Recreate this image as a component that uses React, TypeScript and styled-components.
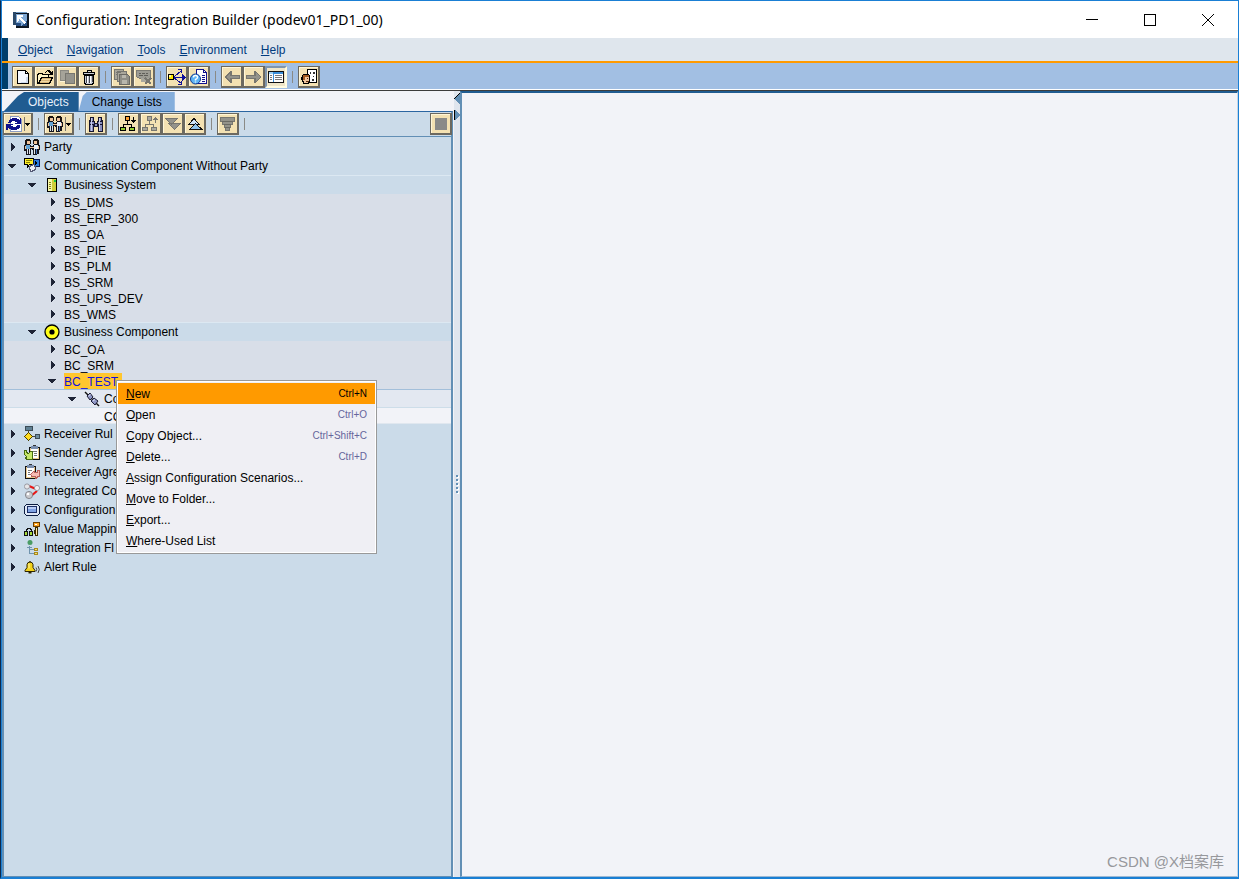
import React from "react";
import styled, { createGlobalStyle, css } from "styled-components";

const color = {
  frame: "#1a7fd4",
  navy: "#003e6b",
  orange: "#ff9a00",
  menuBar: "#dfe6ed",
  toolBar: "#a2bfe3",
  pane: "#f2f3f8",
  tree: "#cbdbe9",
  group: "#d8dee8",
  edge: "#628fb5",
  tabActive: "#205c91",
  tabIdle: "#86aedc",
};

const Global = createGlobalStyle`
  * { box-sizing: border-box; }
  html, body { margin: 0; padding: 0; }
  body {
    font-family: "Liberation Sans", Arial, sans-serif;
    font-size: 12px;
    line-height: 16px;
    color: #000;
  }
  button { font: inherit; color: inherit; padding: 0; margin: 0; border: 0; background: none; text-align: left; }
  ul { list-style: none; margin: 0; padding: 0; }
  svg { flex: none; }
`;

/* ---------- window frame ---------- */

const Window = styled.div`
  position: relative;
  display: flex;
  flex-direction: column;
  min-height: 100vh;
  border: 1px solid ${color.frame};
  border-left-color: #0c2a4d;
  border-bottom-width: 2px;
  box-shadow: inset 1px 0 0 ${color.frame};
  padding-left: 1px;
  background: ${color.pane};
`;

const TitleBar = styled.header`
  display: flex;
  align-items: center;
  height: 37px;
  padding: 0 1px 0 11px;
  background: #fff;
`;

const Title = styled.h1`
  flex: 1;
  margin: 0 0 0 7px;
  font: 400 14px/20px "Noto Sans", "Open Sans", sans-serif;
`;

const CaptionButton = styled.button`
  display: flex;
  align-items: center;
  justify-content: center;
  width: 58px;
  height: 37px;
`;

const MenuBar = styled.nav`
  display: flex;
  align-items: center;
  gap: 14px;
  height: 23px;
  padding-left: 10px;
  border-left: 6px solid ${color.navy};
  background: ${color.menuBar};
  color: #003a7d;
`;

const ToolStrip = styled.div`
  display: flex;
  align-items: center;
  height: 26px;
  padding: 2px 0 0 4px;
  border-left: 6px solid ${color.navy};
  background: ${color.toolBar};
`;

const ToolFrame = styled.div`
  border-top: 2px solid ${color.orange};
  border-bottom: 1px solid #3c3c3c;
  padding-bottom: 1px;
  background: #fff;
`;

const ToolButton = styled.button<{ $pressed?: boolean; $wide?: boolean }>`
  display: flex;
  align-items: center;
  justify-content: center;
  flex: none;
  width: ${(p) => (p.$wide ? 30 : 22)}px;
  height: 22px;
  border: 1px solid #6c6960;
  border-right-width: 2px;
  border-bottom-width: 2px;
  background: #f3e1b2;
  box-shadow: inset 1px 1px 0 #fff6d8;
  ${(p) =>
    p.$pressed &&
    css`
      border: 2px solid #7f95ad;
      border-right-color: #fffbe0;
      border-bottom-color: #fffbe0;
      background: #eee5c8;
      box-shadow: none;
    `}
`;

const Separator = styled.span`
  flex: none;
  width: 1px;
  height: 12px;
  margin: 0 5px;
  background: #8a8a86;
`;

const Spacer = styled.span`
  flex: 1;
`;

/* ---------- body ---------- */

const Body = styled.main`
  flex: 1;
  display: grid;
  grid-template-columns: 451px 7px 1fr;
`;

const Navigator = styled.section`
  display: flex;
  flex-direction: column;
`;

const Tabs = styled.div`
  display: flex;
  height: 20px;
`;

const Tab = styled.button<{ $active?: boolean }>`
  height: 20px;
  padding: ${(p) => (p.$active ? "1px 10px 0 26px" : "1px 13px 0 13px")};
  color: ${(p) => (p.$active ? "#e8f1fb" : "#000")};
  background: ${(p) => (p.$active ? color.tabActive : color.tabIdle)};
  clip-path: ${(p) =>
    p.$active
      ? "polygon(2px 100%, 16px 5px, 22px 1px, 100% 1px, 100% 100%)"
      : "polygon(0 100%, 4px 5px, 8px 1px, 100% 1px, 100% 100%)"};
`;

const TreePane = styled.div`
  flex: 1;
  display: flex;
  flex-direction: column;
  border: 2px solid ${color.edge};
  border-top: 1px solid #2b65a0;
  border-bottom-width: 1px;
  background: ${color.tree};
`;

const TreeTools = styled.div`
  display: flex;
  align-items: center;
  height: 25px;
  margin: 0 -1px;
  border-bottom: 1px solid ${color.edge};
`;

type Tone = "plain" | "section" | "leaf" | "channel" | "last";

const tones = {
  plain: css`
    height: 19px;
  `,
  section: css`
    height: 19px;
    box-shadow: inset 0 1px 0 #dce8f2;
  `,
  leaf: css`
    height: 16px;
    background: ${color.group};
  `,
  channel: css`
    height: 19px;
    background: #e3e8f1;
    border-top: 1px solid #a3bfda;
    border-bottom: 1px solid #cddde9;
  `,
  last: css`
    height: 16px;
    background: ${color.pane};
    border-bottom: 1px solid #e0e7ef;
  `,
};

const Row = styled.div<{ $level: number; $tone: Tone }>`
  position: relative;
  display: flex;
  align-items: center;
  gap: 4px;
  padding-left: ${(p) => p.$level * 20}px;
  white-space: nowrap;
  ${(p) => tones[p.$tone]}
`;

const Twist = styled.button`
  display: flex;
  align-items: center;
  justify-content: center;
  width: 16px;
  height: 12px;
`;

const Label = styled.span<{ $selected?: boolean; $small?: boolean }>`
  ${(p) =>
    p.$small &&
    css`
      height: 16px;
      line-height: 18px;
    `}
  ${(p) =>
    p.$selected &&
    css`
      padding-right: 4px;
      background: #ffc62e;
      color: #1010e0;
    `}
`;

const Splitter = styled.div`
  display: grid;
  grid-template-rows: 1fr auto 1fr;
  justify-items: end;
  border-left: 1px solid ${color.pane};
  background: #dfe5ee;
`;

const Editor = styled.section`
  border-left: 2px solid ${color.edge};
  border-top: 2px solid ${color.tabActive};
  border-right: 1px solid #c5d5e6;
  border-bottom: 1px solid #9db9d4;
  background: ${color.pane};
`;

/* ---------- context menu ---------- */

const Popup = styled.ul`
  position: absolute;
  z-index: 2;
  left: 112px;
  top: 7px;
  width: 261px;
  padding: 2px 1px;
  border: 1px solid #999;
  outline: 1px solid #fff;
  outline-offset: -2px;
  background: #efeff4;
`;

const Command = styled.button<{ $active?: boolean }>`
  display: flex;
  align-items: center;
  justify-content: space-between;
  width: 100%;
  height: 21px;
  padding: 0 8px;
  background: ${(p) => (p.$active ? color.orange : "transparent")};
  kbd {
    font: 10px/12px "Liberation Sans", Arial, sans-serif;
    color: ${(p) => (p.$active ? "#000" : "#66669c")};
  }
`;

const Watermark = styled.small`
  position: absolute;
  right: 14px;
  bottom: 5px;
  font: 15px/20px "Liberation Sans", "Noto Sans CJK SC", sans-serif;
  color: #97989c;
`;

/* ---------- icons ---------- */

const Svg = ({ w = 16, h = 16, children }: { w?: number; h?: number; children: React.ReactNode }) => (
  <svg width={w} height={h} viewBox={`0 0 ${w} ${h}`} shapeRendering="crispEdges" aria-hidden="true">
    {children}
  </svg>
);

const AppIcon = () => (
  <Svg>
    <rect x="0" y="0" width="14" height="13" fill="#6f98c2" />
    <rect x="0" y="0" width="3" height="13" fill="#2b4a6b" />
    <rect x="3" y="1" width="13" height="15" fill="#0c1622" />
    <rect x="3" y="2" width="11" height="12" fill="#7fa8d4" />
    <path d="M8 14l6-6v6zM3 11h5v3H3z" fill="#244c80" />
    <path d="M4 3h6v2H8v1h1v1h1v1h1v1h1v1h1v1h-1v1h-1v-1h-1v-1H9V9H8V8H7V7H6v2H5v1H4z" fill="#fff" />
  </Svg>
);

const NewDoc = () => (
  <Svg>
    <path d="M2.500 1.500h8l3 3v10h-11z" fill="#fff" stroke="#000" />
    <path d="M3 2h7v3h3v9H3z" fill="#f4f8ff" />
    <path d="M10.500 2v2.500H13" fill="none" stroke="#000" />
    <path d="M11 8h2v6H6v-1h5z" fill="#cfdcf0" />
  </Svg>
);

const OpenFolder = () => (
  <Svg>
    <path d="M0.500 14.500v-9h1v-1h4v1h6v3" fill="#f8e8a8" stroke="#000" />
    <path d="M1.500 14.500l3-6h11l-3 6z" fill="#d9b578" stroke="#000" />
    <path d="M1 6h10v2H4L2 12H1z" fill="#fdf3c8" />
    <path d="M8 3h1V2h1V1h3v1h1v1h1V2h1v4h-4V5h1V4h-1V3h-1V2h-1v1H9v1H8z" fill="#000" />
    <path d="M5 10.500h8M4 12.500h8" stroke="#efd9a6" />
  </Svg>
);

const CopyDocs = () => (
  <Svg>
    <rect x="1.500" y="1.500" width="8" height="10" fill="#a5a399" stroke="#8a8982" />
    <rect x="6.500" y="4.500" width="9" height="10" fill="#94938c" stroke="#77766f" />
    <path d="M1 12h5v1H1z" fill="#fff6d8" />
  </Svg>
);

const Trash = () => (
  <Svg>
    <path d="M6 1h5v2H6z" fill="#000" />
    <path d="M7 2h3v1H7z" fill="#ddd" />
    <rect x="2.500" y="3.500" width="11" height="2" fill="#c9ccd6" stroke="#000" />
    <path d="M3.500 6v8h1v1h7v-1h1V6z" fill="#c5c8d2" stroke="#000" />
    <path d="M5.500 7v7M8.500 7v7M11.500 7v6" stroke="#43454e" />
    <path d="M6.500 7v7M9.500 7v7" stroke="#fff" />
  </Svg>
);

const SaveCopies = () => (
  <Svg>
    <rect x="0.500" y="0.500" width="9" height="10" fill="#aaa79b" stroke="#77766f" />
    <rect x="3.500" y="2.500" width="9" height="10" fill="#aaa79b" stroke="#77766f" />
    <path d="M5.500 5.500h8l2 2v8h-10z" fill="#8f8e86" stroke="#6b6a64" />
    <rect x="8" y="6" width="4" height="3" fill="#b8b6ac" />
    <rect x="8" y="11" width="5" height="4" fill="#b8b6ac" />
    <path d="M2 3h5M2 5h1" stroke="#77766f" />
  </Svg>
);

const DeleteList = () => (
  <Svg>
    <path d="M0.500 1.500h14v8h-11l-3-2z" fill="#9c9b93" stroke="#7b7a73" />
    <path d="M3 4.500h2M6 4.500h3M10 4.500h2M3 6.500h4M8 6.500h4" stroke="#5f5e59" />
    <path d="M5 9h8v4H5z" fill="#a8a69c" />
    <path d="M9 9l6 6M15 9l-6 6" stroke="#77766f" strokeWidth="2" />
  </Svg>
);

const Distribute = () => (
  <Svg w={18}>
    <path d="M6 8l7-6M6 8.500h10M6 9l7 5" stroke="#10109a" fill="none" />
    <path d="M10 0h4v4h-1V1h-3zM14 5h1v1h1v1h1v1h1v1h-1v1h-1v1h-1v1h-1V9h2V8h-2zM10 16h4v-4h-1v3h-3z" fill="#10109a" />
    <rect x="0.500" y="5.500" width="5" height="5" fill="#ffe800" stroke="#000" />
    <rect x="1" y="6" width="2" height="2" fill="#fffbb0" />
  </Svg>
);

const HelpDoc = () => (
  <Svg w={17}>
    <path d="M6.500 0.500h7l3 3v11h-10z" fill="#fff" stroke="#10108c" />
    <path d="M13.500 1v2.500H16M12 6.500h3M12 8.500h3M12 10.500h3M12 12.500h3" fill="none" stroke="#10108c" />
    <circle cx="5.500" cy="10" r="5" fill="#5eb4f4" stroke="#103a92" shapeRendering="auto" />
    <path d="M3.500 8.500q0-2 2-2t2 2q0 1-2 2v1M5.500 12.500v1" fill="none" stroke="#fff" strokeWidth="1.400" shapeRendering="auto" />
  </Svg>
);

const Arrow = ({ right }: { right?: boolean }) => (
  <Svg>
    <g transform={right ? "translate(16 0) scale(-1 1)" : undefined}>
      <path d="M0 8h1V7h1V6h1V5h1V4h1V3h1V2h2v4h8v4H8v4H6v-1H5v-1H4v-1H3v-1H2V9H1V8z" fill="#77766f" />
      <path d="M2 8l4-4v3h9v2H6v3z" fill="#94938b" />
    </g>
  </Svg>
);

const ListView = () => (
  <Svg>
    <rect x="0.500" y="2.500" width="15" height="11" fill="#fff" stroke="#111" />
    <rect x="1" y="3" width="14" height="2" fill="#3a8ed8" />
    <rect x="1" y="3" width="4" height="2" fill="#9cd0f4" />
    <path d="M5.500 5v8" stroke="#3a8ed8" />
    <path d="M2 6.500h2M2 8.500h2M2 10.500h2M7 6.500h7M7 8.500h7M7 10.500h7" stroke="#777" />
  </Svg>
);

const Person = () => (
  <Svg>
    <path d="M6.500 0.500h9v13h-9z" fill="#fff" stroke="#000" />
    <path d="M9 3h1v2H9zM12 3h2v2h-2zM12 7h1v1h-1zM11 10h2v2h-2z" fill="#333" />
    <path d="M1.500 6.500h1v-1h5v1h1v6h-1v2h-5v-2h-1z" fill="#f0c49c" stroke="#000" />
    <path d="M2 6h6v2H4v3H2z" fill="#a35a20" />
    <path d="M6 9h1v1H6zM5 12h3v1H5z" fill="#5c2c0c" />
    <path d="M0 8h1v3H0z" fill="#000" />
  </Svg>
);

const Refresh = () => (
  <Svg w={24}>
    <path d="M4.500 0.500h8l3 3v12h-11z" fill="#fff" stroke="#8c9cc0" />
    <path d="M3 6V4h1V3h2V2h5v1h2v1h1V2h1v6H9V7h2V6H9V5H6v1H5v1H2V6zM14 10v2h-1v1h-2v1H5v-1H3v-1H2v2H0V8h7v1H5v1h2v1h3v-1h1V9h3z" fill="#10108c" />
    <path d="M18.500 1v14" stroke="#77766f" />
    <path d="M19 7h5v1h-1v1h-1v1h-1V9h-1V8h-1z" fill="#000" />
  </Svg>
);

const People = () => (
  <>
    <path d="M2 0h4v1h1v4h-1v1H2V5H1V1h1zM10 0h4v1h1v4h-1v1h-4V5H9V1h1z" fill="#1a1410" />
    <path d="M3 2h3v3H3zM10 2h3v3h-3z" fill="#f0c49c" />
    <path d="M1 5h5v1h1v1h2V6h1V5h5v1h1v5h-1v4h-2v1h-4v-5H8v-1H7v6H2v-4H0V6h1z" fill="#15151c" />
    <path d="M2 6h4v4H2z" fill="#63a5d6" />
    <path d="M10 6h4v4h-4z" fill="#e8f2fa" />
    <path d="M1 7h1v3H1zM6 8h4v1H6zM14 7h1v3h-1z" fill="#f0c49c" />
    <path d="M3 10h1v5H3zM5 10h1v5H5zM10 10h1v5h-1z" fill="#dfe4ec" />
    <path d="M12 10h1v5h-1z" fill="#4a78b8" />
  </>
);

const PartyIcon = () => (
  <Svg>
    <People />
  </Svg>
);

const PartyMenu = () => (
  <Svg w={24}>
    <People />
    <path d="M18.500 1v14" stroke="#77766f" />
    <path d="M19 7h5v1h-1v1h-1v1h-1V9h-1V8h-1z" fill="#000" />
  </Svg>
);

const Binoculars = () => (
  <Svg>
    <path d="M2 1h4v4h1v2h2V5h1V1h4v3h1v12h-5v-5H6v5H1V4h1z" fill="#15152e" />
    <path d="M3 2h2v3H3zM2 6h4v2H2zM2 9h3v6H2zM11 2h2v3h-2zM10 6h4v2h-4zM11 9h3v6h-3zM7 8h2v2H7z" fill="#8b8fc0" />
    <path d="M3 2h1v13H3zM11 2h1v13h-1z" fill="#c8ccec" />
  </Svg>
);

const Hierarchy = ({ up, off }: { up?: boolean; off?: boolean }) => {
  const line = off ? "#77766f" : "#000";
  return (
    <Svg w={17}>
      <path d="M7.500 5v4M3.500 11V8.500h8V11" fill="none" stroke={line} />
      <rect x="5.500" y="0.500" width="4" height="4" fill={off ? "#aaa89e" : "#ffa030"} stroke={line} />
      <rect x="0.500" y="11.500" width="5" height="3" fill={off ? "#aaa89e" : "#90d030"} stroke={line} />
      <rect x="9.500" y="11.500" width="5" height="3" fill={off ? "#aaa89e" : "#90d030"} stroke={line} />
      {up ? (
        <path d="M13 7V3h-1V2h1V1h1v1h1v1h-1v4zM11 3h5v1h-5z" fill={line} />
      ) : (
        <path d="M13 1h1v3h2v1h-1v1h-1v1h-1V6h-1V5h-1V4h2z" fill={line} />
      )}
    </Svg>
  );
};

const ExpandAll = () => (
  <Svg>
    <path d="M0.500 2.500h12l-6 6zM3.500 7.500h12l-6 6z" fill="#94938b" stroke="#77766f" />
  </Svg>
);

const CollapseAll = () => (
  <Svg>
    <path d="M1.500 8.500l5.500-6 5.500 6z" fill="#cfe6fa" stroke="#111" />
    <path d="M2.500 13.500l6-6 6.500 6z" fill="#8fc4ee" stroke="#111" />
  </Svg>
);

const Filter = () => (
  <Svg>
    <path d="M0.500 1.500h14v4h-2v3h-2v3h-1v3h-4v-3h-1v-3h-2v-3h-2z" fill="#94938b" stroke="#77766f" />
    <path d="M2 5.500h11M4 8.500h7M5 11.500h5" stroke="#6b6a64" />
  </Svg>
);

const Stop = () => (
  <Svg>
    <rect x="2" y="2" width="12" height="12" fill="#8a8a88" />
  </Svg>
);

const CommIcon = () => (
  <Svg>
    <path d="M0.500 0.500h9v6h-4l-2 3v-3h-3z" fill="#ffef2a" stroke="#000" />
    <path d="M2 2.500h6M2 4.500h4" stroke="#8a8200" />
    <rect x="9.500" y="1.500" width="6" height="7" fill="#2b7fe0" stroke="#0a1850" />
    <path d="M11 3h1v1h1v2h-1v1h-1z" fill="#000" />
    <path d="M5.500 8.500h1v-1h2v-1h2v2h1v3h-1v1h-2v1h-2v-2h-1z" fill="#eef1f8" stroke="#555a75" />
  </Svg>
);

const SystemIcon = () => (
  <Svg>
    <rect x="3.500" y="1.500" width="9" height="13" fill="#cfcf3a" stroke="#000" />
    <rect x="4" y="2" width="4" height="12" fill="#f6f7a8" />
    <path d="M5 5.500h2M5 7.500h2M5 9.500h2M5 11.500h2" stroke="#80801c" />
    <rect x="10" y="3" width="2" height="2" fill="#1fc43a" />
  </Svg>
);

const ComponentIcon = () => (
  <svg width="16" height="16" viewBox="0 0 16 16" aria-hidden="true">
    <circle cx="8" cy="8" r="7" fill="#ffff18" stroke="#000" strokeWidth="1.300" />
    <circle cx="8" cy="8" r="2.600" fill="#000" />
  </svg>
);

const ChannelIcon = () => (
  <svg width="16" height="16" viewBox="0 0 16 16" aria-hidden="true">
    <path d="M1 1l14 14" stroke="#111" strokeWidth="1.400" />
    <path d="M3 5l3-3 3 4-3 3z" fill="#8f97c6" stroke="#1c1c34" />
    <path d="M7 10l3-3 4 3-3 4z" fill="#8f97c6" stroke="#1c1c34" />
    <path d="M4.500 5l2-1.500M9 10l2-1.500" stroke="#dfe2f5" />
  </svg>
);

const RuleIcon = () => (
  <Svg>
    <path d="M4.500 5v2M8 10.500h3" stroke="#444" fill="none" />
    <rect x="1.500" y="0.500" width="7" height="4" fill="#5f7f92" stroke="#3c4c56" />
    <path d="M4 6h1v1h1v1h1v1h1v1h1v1H8v1H7v1H6v1H5v1H4v-1H3v-1H2v-1H1v-1H0v-1h1V9h1V8h1V7h1z" fill="#4a4000" />
    <path d="M4 7h1v1h1v1h1v1h1v1H7v1H6v1H5v1H4v-1H3v-1H2v-1H1v-1h1V9h1V8h1z" fill="#ffdc20" />
    <rect x="11.500" y="8.500" width="4" height="4" fill="#6e8ea0" stroke="#3c4c56" />
  </Svg>
);

const Clipboard = ({ receive }: { receive?: boolean }) => (
  <Svg>
    <rect x={receive ? 1.5 : 5.5} y="2.500" width="10" height="12" fill="#e9c98e" stroke="#111" />
    <rect x={receive ? 3 : 7} y="4" width="7" height="9" fill="#fff" />
    <path d={receive ? "M3 1h7v3H3z" : "M7 1h7v3H7z"} fill="#7a8fae" />
    <path d={receive ? "M5 0h3v1H5z" : "M9 0h3v1H9z"} fill="#333" />
    {receive ? (
      <>
        <path d="M4 6.500h4M4 8.500h2M4 10.500h2" stroke="#777" />
        <path d="M15.500 6.500v6h-2v1h-1v1h-1v-2h-4v-1l-1-1 3-3 2 1h2v-2z" fill="#f7bcb4" stroke="#b8605a" />
      </>
    ) : (
      <>
        <path d="M9 6.500h4M10 8.500h3M10 10.500h3" stroke="#777" />
        <path d="M0.500 5.500h2v2l2 1 2-2h2v8h-6v-1h-1l1-2-2-2z" fill="#c6e86a" stroke="#456b10" />
      </>
    )}
  </Svg>
);

const IntegratedIcon = () => (
  <svg width="16" height="16" viewBox="0 0 16 16" aria-hidden="true">
    <path d="M5 3l7 3M13 8l-6 5" stroke="#e81818" strokeWidth="2.200" />
    <circle cx="3" cy="3.500" r="2.600" fill="#e6e6e8" stroke="#8c8c94" strokeWidth="0.800" />
    <circle cx="13" cy="5" r="2.600" fill="#f0f0f2" stroke="#8c8c94" strokeWidth="0.800" />
    <circle cx="5" cy="12" r="3.600" fill="#c9c9cd" stroke="#77777e" strokeWidth="0.800" />
    <circle cx="4" cy="11" r="1.300" fill="#fff" />
  </svg>
);

const ConfigIcon = () => (
  <Svg>
    <path d="M1 3h1V2h12v1h1v1h1v8h-1v1h-1v1H2v-1H1v-1H0V4h1z" fill="#0c1c40" />
    <path d="M2 3h12v1h1v8h-1v1H2v-1H1V4h1z" fill="#dfe8f6" />
    <rect x="3.500" y="4.500" width="9" height="6" fill="#7fa3e4" stroke="#1c2f66" />
    <rect x="4" y="5" width="8" height="2" fill="#b9cdf6" />
  </Svg>
);

const MappingIcon = () => (
  <Svg>
    <path d="M2.500 10V8.500h1v-1h3v1h1V10M7 10.500V9" fill="none" stroke="#111" />
    <path d="M0.500 10.500h3v4h-3zM5.500 10.500h3v4h-3z" fill="#a8dc3c" stroke="#111" />
    <path d="M9.500 1.500h6v4h-6z" fill="#ffa824" stroke="#6a3d00" />
    <path d="M11.500 6.500h2v8h-2v-2h-1v-1h1v-1h-1v-1h1z" fill="#ffe7a0" stroke="#3c2c00" />
    <path d="M11 3h2v1h-2z" fill="#fff" />
  </Svg>
);

const FlowIcon = () => (
  <Svg>
    <circle cx="6" cy="2.500" r="2.500" fill="#4a9c64" shapeRendering="auto" />
    <path d="M5.500 6v7.500H10M5.500 9.500H10M3 7.500h5" fill="none" stroke="#6f93ad" />
    <rect x="10.500" y="8.500" width="3" height="2" fill="#f5e070" stroke="#a8881c" />
    <rect x="10.500" y="12.500" width="3" height="2" fill="#f5e070" stroke="#a8881c" />
  </Svg>
);

const BellIcon = () => (
  <svg width="16" height="16" viewBox="0 0 16 16" aria-hidden="true">
    <path d="M5.500 2.500h1v1h1.500l1 2v3l2 3v1h-10v-1l2-3v-3l1-2h1.500z" fill="#f2d21c" stroke="#2c2400" />
    <path d="M5 4.500v5" stroke="#fff6a8" />
    <path d="M4.500 13h3v1.500h-3z" fill="#2c2400" />
    <path d="M12 8.500q1.500 2 0 4M14 7q2.500 3.500 0 7" fill="none" stroke="#444" />
  </svg>
);

const Closed = () => (
  <Svg w={6} h={10}>
    <path d="M2 1h1v1h1v1h1v1h1v2H5v1H4v1H3v1H2z" fill="#1e2436" />
  </Svg>
);

const Opened = () => (
  <Svg w={8} h={4}>
    <path d="M0 0h8v1H7v1H6v1H5v1H3V3H2V2H1V1H0z" fill="#1e2436" />
  </Svg>
);

const CollapseArrows = () => (
  <Svg w={6} h={32}>
    <path d="M6 2v11H5v-1H4v-1H3v-1H2V9H1V8H0V7h1V6h1V5h1V4h1V3h1V2z" fill={color.edge} />
    <path d="M0 7h1V6h1V5h1V4h1V3h1V2h1v1H5v1H4v1H3v1H2v1H1v1H0z" fill="#000" />
    <path d="M1 19h1v1h1v1h1v1h1v1h1v2H5v1H4v1H3v1H2v1H1z" fill={color.edge} />
    <path d="M0 19h1v10H0z" fill="#000" />
  </Svg>
);

const Grip = () => (
  <Svg w={4} h={19}>
    {[0, 4, 8, 12, 16].map((y) => (
      <React.Fragment key={y}>
        <rect x="1" y={y + 1} width="2" height="2" fill="#fff" />
        <rect x="0" y={y} width="2" height="2" fill={color.edge} />
      </React.Fragment>
    ))}
  </Svg>
);

/* ---------- data ---------- */

interface Node {
  text: string;
  level: number;
  tone: Tone;
  open?: boolean;
  leaf?: boolean;
  selected?: boolean;
  icon?: React.ReactNode;
}

const leaf = (text: string): Node => ({ text, level: 2, tone: "leaf" });
const top = (text: string, icon: React.ReactNode): Node => ({ text, level: 0, tone: "plain", icon });

const nodes: Node[] = [
  top("Party", <PartyIcon />),
  { ...top("Communication Component Without Party", <CommIcon />), open: true },
  { text: "Business System", level: 1, tone: "section", open: true, icon: <SystemIcon /> },
  ...["BS_DMS", "BS_ERP_300", "BS_OA", "BS_PIE", "BS_PLM", "BS_SRM", "BS_UPS_DEV", "BS_WMS"].map(leaf),
  { text: "Business Component", level: 1, tone: "section", open: true, icon: <ComponentIcon /> },
  leaf("BC_OA"),
  leaf("BC_SRM"),
  { ...leaf("BC_TEST"), open: true, selected: true },
  { text: "Co", level: 3, tone: "channel", open: true, icon: <ChannelIcon /> },
  { text: "CC", level: 4, tone: "last", leaf: true },
  top("Receiver Rul", <RuleIcon />),
  top("Sender Agree", <Clipboard />),
  top("Receiver Agre", <Clipboard receive />),
  top("Integrated Co", <IntegratedIcon />),
  top("Configuration", <ConfigIcon />),
  top("Value Mappin", <MappingIcon />),
  top("Integration Fl", <FlowIcon />),
  top("Alert Rule", <BellIcon />),
];

const commands: [string, string?][] = [
  ["New", "Ctrl+N"],
  ["Open", "Ctrl+O"],
  ["Copy Object...", "Ctrl+Shift+C"],
  ["Delete...", "Ctrl+D"],
  ["Assign Configuration Scenarios..."],
  ["Move to Folder..."],
  ["Export..."],
  ["Where-Used List"],
];

const Mnemonic = ({ text }: { text: string }) => (
  <span>
    <u>{text[0]}</u>
    {text.slice(1)}
  </span>
);

const mainTools: [string, React.ReactNode][][] = [
  [["New", <NewDoc />], ["Open", <OpenFolder />], ["Copy", <CopyDocs />], ["Delete", <Trash />]],
  [["Save all", <SaveCopies />], ["Discard", <DeleteList />]],
  [["Where used", <Distribute />], ["Help", <HelpDoc />]],
  [["Back", <Arrow />], ["Forward", <Arrow right />], ["List view", <ListView />]],
  [["User", <Person />]],
];

const treeTools: [string, React.ReactNode][][] = [
  [["Refresh", <Refresh />]],
  [["Party filter", <PartyMenu />]],
  [["Find", <Binoculars />]],
  [
    ["Expand node", <Hierarchy />],
    ["Collapse node", <Hierarchy up off />],
    ["Expand all", <ExpandAll />],
    ["Collapse all", <CollapseAll />],
  ],
  [["Filter", <Filter />]],
];

const Tools = ({ groups, wide = 0 }: { groups: [string, React.ReactNode][][]; wide?: number }) => (
  <>
    {groups.map((group, i) => (
      <React.Fragment key={i}>
        {i > 0 && <Separator />}
        {group.map(([name, icon]) => (
          <ToolButton key={name} aria-label={name} $wide={i < wide} $pressed={name === "List view"}>
            {icon}
          </ToolButton>
        ))}
      </React.Fragment>
    ))}
  </>
);

const ContextMenu = () => (
  <Popup role="menu">
    {commands.map(([text, keys], i) => (
      <li key={text} role="none">
        <Command role="menuitem" $active={i === 0}>
          <Mnemonic text={text} />
          {keys && <kbd>{keys}</kbd>}
        </Command>
      </li>
    ))}
  </Popup>
);

export default function App() {
  return (
    <>
      <Global />
      <Window>
        <TitleBar>
          <AppIcon />
          <Title>Configuration: Integration Builder (podev01_PD1_00)</Title>
          <CaptionButton aria-label="Minimize">
            <Svg w={12} h={12}>
              <path d="M0 5h12v1H0z" fill="#000" />
            </Svg>
          </CaptionButton>
          <CaptionButton aria-label="Maximize">
            <Svg w={12} h={12}>
              <rect x="0.500" y="0.500" width="11" height="11" fill="none" stroke="#000" />
            </Svg>
          </CaptionButton>
          <CaptionButton aria-label="Close">
            <svg width="12" height="12" viewBox="0 0 12 12" aria-hidden="true">
              <path d="M0 0l12 12M12 0L0 12" stroke="#000" />
            </svg>
          </CaptionButton>
        </TitleBar>
        <MenuBar>
          {["Object", "Navigation", "Tools", "Environment", "Help"].map((name) => (
            <button key={name}>
              <Mnemonic text={name} />
            </button>
          ))}
        </MenuBar>
        <ToolFrame>
          <ToolStrip role="toolbar">
            <Tools groups={mainTools} />
          </ToolStrip>
        </ToolFrame>
        <Body>
          <Navigator>
            <Tabs role="tablist">
              <Tab role="tab" $active aria-selected="true">
                Objects
              </Tab>
              <Tab role="tab" aria-selected="false">
                Change Lists
              </Tab>
            </Tabs>
            <TreePane>
              <TreeTools role="toolbar">
                <Tools groups={treeTools} wide={2} />
                <Separator />
                <Spacer />
                <ToolButton aria-label="Stop">
                  <Stop />
                </ToolButton>
              </TreeTools>
              <ul role="tree">
                {nodes.map((n) => (
                  <li key={n.text} role="treeitem" aria-expanded={n.leaf ? undefined : !!n.open}>
                    <Row $level={n.level} $tone={n.tone}>
                      {n.leaf ? (
                        <Twist as="span" />
                      ) : (
                        <Twist aria-label={`Toggle ${n.text}`}>{n.open ? <Opened /> : <Closed />}</Twist>
                      )}
                      {n.icon}
                      <Label $selected={n.selected} $small={n.tone === "leaf" || n.tone === "last"}>
                        {n.text}
                      </Label>
                      {n.selected && <ContextMenu />}
                    </Row>
                  </li>
                ))}
              </ul>
            </TreePane>
          </Navigator>
          <Splitter>
            <CollapseArrows />
            <Grip />
          </Splitter>
          <Editor aria-label="Editor" />
        </Body>
        <Watermark>CSDN @X档案库</Watermark>
      </Window>
    </>
  );
}
